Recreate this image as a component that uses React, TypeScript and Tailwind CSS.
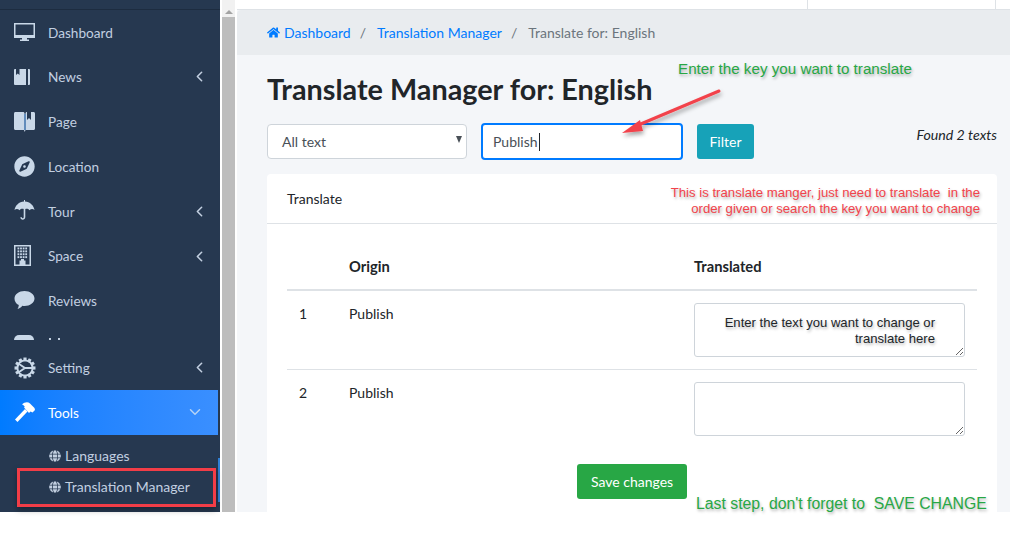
import { FaCompass, FaGlobe, FaHome } from "react-icons/fa";
import { ChevronLeft, ChevronDown } from "lucide-react";

const sans = "font-['Lato','Open_Sans',sans-serif]";
const C = "#c9d8e8";

function Desktop() {
  return (
    <svg width="22" height="22" viewBox="0 0 22 22">
      <rect x="0.75" y="2.75" width="19.5" height="13" fill="none" stroke={C} strokeWidth="1.5" />
      <rect x="0" y="14" width="21" height="3" fill={C} />
      <path d="M8 17h5v1.5h2V20H6v-1.500h2z" fill={C} />
    </svg>
  );
}
function Book() {
  return (
    <svg width="22" height="22" viewBox="0 0 22 22">
      <path d="M1 3h11v16H1a1 1 0 0 1-1-1V4a1 1 0 0 1 1-1z" fill={C} />
      <path d="M2 3h3.500v6L3.750 7.500 2 9z" fill="#263850" />
      <path d="M14 3h1a1 1 0 0 1 1 1v14a1 1 0 0 1-1 1h-1z" fill={C} />
    </svg>
  );
}
function Page() {
  return (
    <svg width="22" height="22" viewBox="0 0 22 22">
      <path d="M1.500 1h7.500c1 0 1.500.6 1.500 1.500V19H1.500C.6 19 0 18.400 0 17.500v-15C0 1.600.6 1 1.500 1z" fill={C} />
      <path d="M11.500 2.500c0-.9.5-1.500 1.500-1.500v8l2-2 2 2V1h2.500c.9 0 1.500.6 1.500 1.500v15c0 .9-.6 1.500-1.500 1.500h-8z" fill={C} />
      <rect x="10.500" y="3" width="1" height="16" fill="#4a90d9" />
      <path d="M10 19h1.500L10.800 21z" fill={C} />
    </svg>
  );
}
function Umbrella() {
  return (
    <svg width="22" height="22" viewBox="0 0 22 22">
      <path d="M10 0h1v1.500c5 .4 8.700 3.800 9.500 8.500-1.500-1.500-3.500-1.500-5 .2-1.200-1.400-2.300-1.700-4.200-1.300V17c0 3.500-5 3.500-5 .2h1.600c0 1.500 1.800 1.500 1.800-.2V8.900C8 8.500 6.700 8.800 5.500 10.200 4 8.500 2 8.500.5 10 1.300 5.300 5 1.900 10 1.500z" fill={C} />
    </svg>
  );
}
function Building() {
  const cells = [];
  for (let r = 0; r < 4; r++) for (let c = 0; c < 4; c++) cells.push(<rect key={`${r}-${c}`} x={3.500 + c * 2.600} y={2.500 + r * 2.900} width="1.800" height="1.900" fill={C} />);
  return (
    <svg width="22" height="22" viewBox="0 0 22 22">
      <rect x="0.750" y="0.750" width="15.500" height="19.500" fill="none" stroke={C} strokeWidth="1.500" />
      {cells}
      <path d="M5.500 20v-4.500h1.500V14h3v1.500h1.500V20z" fill={C} />
    </svg>
  );
}
function Comment() {
  return (
    <svg width="22" height="22" viewBox="0 0 22 22">
      <path d="M10.500 1C16 1 20.500 4.400 20.500 8.500S16 16 10.500 16c-.8 0-1.500-.1-2.200-.2C7 17.500 5.500 18.600 3.500 19c.8-1 1.200-2.300 1.300-3.900C2 13.800.5 11.300.5 8.500.5 4.400 5 1 10.500 1z" fill={C} />
    </svg>
  );
}
function Gear() {
  const teeth = [];
  for (let i = 0; i < 12; i++) teeth.push(<rect key={i} x="9" y="0.500" width="3" height="3.500" fill={C} transform={`rotate(${i * 30} 10.500 10.500)`} />);
  return (
    <svg width="22" height="22" viewBox="0 0 21 21">
      {teeth}
      <circle cx="10.500" cy="10.500" r="7.300" fill="none" stroke={C} strokeWidth="1.800" />
      <path d="M10.500 10.500L4.500 6.500M10.500 10.500L4.500 14.500M10.500 10.500H18" stroke={C} strokeWidth="1.800" />
    </svg>
  );
}
function Hammer() {
  return (
    <svg width="22" height="22" viewBox="0 0 22 22">
      <path d="M1 18.500L11 8l2.500 2.500L3.500 21z" fill="#fff" />
      <path d="M8 3.500C10.500 1 14 .6 16 2.500l4.500 4.500 .5 2-2.500 2.500-2-1-1.500 1.500L10 6.500l.8-.8C10 4.500 9 3.800 8 3.500z" fill="#fff" />
    </svg>
  );
}

function Row({ icon, label, chevron, nudge }: { icon: React.ReactNode; label: string; chevron?: boolean; nudge?: boolean }) {
  return (
    <div className="flex h-[44.8px] shrink-0 items-center pl-[14px] pr-[12px] text-[13.600px] text-[#c2cfe0]">
      <span className="flex w-[34px] shrink-0 items-center">{icon}</span>
      <span className={nudge ? "flex-1 pt-[2px]" : "flex-1"}>{label}</span>
      {chevron && <ChevronLeft size={17} strokeWidth={2.200} className="text-[#c2cfe0]" />}
    </div>
  );
}

export default function App() {
  return (
    <div className={`relative h-[537px] w-[1010px] overflow-hidden bg-white ${sans}`}>
      <div className="flex h-[512px] w-full">
        <aside className="flex w-[220px] shrink-0 flex-col bg-[#263850]">
          <div className="h-[10px] shrink-0 border-b border-[#1d2c40]" />
          <div className="mt-[-0.300px] shrink-0">
            <Row icon={<Desktop />} label="Dashboard" nudge />
            <Row icon={<Book />} label="News" chevron />
            <Row icon={<Page />} label="Page" />
            <Row icon={<FaCompass size={21} color={C} />} label="Location" nudge />
            <Row icon={<Umbrella />} label="Tour" chevron nudge />
            <Row icon={<Building />} label="Space" chevron />
            <Row icon={<Comment />} label="Reviews" />
          </div>
          <div className="flex h-[18px] shrink-0 items-start pl-[14px] pt-[12px]">
            <span className="h-[5px] w-[20px] rounded-t-full bg-[#c9d8e8]" />
            <span className="ml-[15px] mt-[3px] h-[2px] w-[2px] bg-[#c2cfe0]" />
            <span className="ml-[7px] mt-[3px] h-[2px] w-[2px] bg-[#c2cfe0]" />
          </div>
          <div className="shrink-0 pt-[3.900px]">
            <Row icon={<Gear />} label="Setting" chevron nudge />
          </div>
          <div className="flex h-[45px] w-[218px] shrink-0 items-center bg-gradient-to-r from-[#007bff] to-[#3a8fff] pl-[14px] pr-[14px] text-[13.600px] text-white">
            <span className="flex w-[34px] items-center"><Hammer /></span>
            <span className="flex-1 pt-[2px]">Tools</span>
            <ChevronDown size={18} strokeWidth={2} className="text-[#b5d3f5]" />
          </div>
          <div className="flex flex-1 flex-col pl-[49px] pt-[10px] text-[14px] text-[#c2cfe0]">
            <div className="flex h-[22px] items-center gap-[4px]"><FaGlobe className="text-[12px]" />Languages</div>
            <div className="mt-[9px] flex h-[22px] items-center gap-[4px]"><FaGlobe className="text-[12px]" />Translation Manager</div>
          </div>
        </aside>

        <div className="ml-[2px] flex w-[13px] shrink-0 flex-col bg-[#f1f1f1]">
          <div className="mt-px flex h-[16px] items-center justify-center pt-[6px]">
            <div className="h-0 w-0 border-x-[4px] border-b-[4px] border-x-transparent border-b-[#a3a3a3]" />
          </div>
          <div className="flex-1 bg-[#bdbdbd]" />
        </div>

        <main className="ml-[2px] flex min-w-0 flex-1 flex-col bg-[#f4f6f9]">
          <div className="flex h-[10px] shrink-0 border-b border-[#dee2e6] bg-white">
            <div className="ml-[570px] h-full w-[189px] border-x border-[#dee2e6]" />
          </div>
          <nav className="flex h-[45px] shrink-0 items-center rounded-tl-[4px] bg-[#e9ecef] pl-[30px] text-[14px]">
            <FaHome className="mr-[4px] text-[13px] text-[#007bff]" />
            <span className="text-[#007bff]">Dashboard</span>
            <span className="px-[9px] text-[#6c757d]">/</span>
            <span className="ml-[2px] text-[#007bff]">Translation Manager</span>
            <span className="px-[9px] text-[#6c757d]">/</span>
            <span className="ml-[2px] text-[#6c757d]">Translate for: English</span>
          </nav>
          <div className="flex min-h-0 flex-1 flex-col pl-[30px] pr-[13px]">
            <h1 className="mt-[15px] h-[38px] text-[28.800px] font-bold leading-[38px] text-[#212529]">Translate Manager for: English</h1>
            <div className="mt-[15px] flex h-[37px] shrink-0 items-center">
              <div className="relative flex h-[35px] w-[200px] items-center rounded-[4px] border border-[#ced4da] bg-white pl-[14px] text-[14px] text-[#495057]">
                All text
                <span className="absolute right-[4px] top-[11px] h-0 w-0 border-x-[3.500px] border-t-[7px] border-x-transparent border-t-[#495057]" />
              </div>
              <div className="ml-[14px] flex h-[37px] w-[202px] items-center rounded-[4px] border-2 border-[#007bff] bg-white pl-[10px] text-[14px] text-[#495057]">
                Publish<span className="ml-px h-[18px] w-px bg-[#212529]" />
              </div>
              <div className="ml-[14px] flex h-[35px] w-[57px] items-center justify-center rounded-[3px] bg-[#17a2b8] text-[14px] text-white">Filter</div>
              <div className="mb-[14px] flex-1 text-right text-[14.200px] italic text-[#212529]">Found 2 texts</div>
            </div>
            <section className="mt-[14px] min-h-0 flex-1 overflow-hidden rounded-t-[4px] bg-white">
              <div className="flex h-[50px] items-center border-b border-[#dee2e6] pl-[20px] text-[14px] text-[#212529]">Translate</div>
              <div className="mx-[20px] text-[14px] text-[#212529]">
                <div className="flex h-[67px] items-end border-b-2 border-[#dee2e6] pb-[12px] text-[14.700px] font-bold">
                  <span className="w-[62px]" />
                  <span className="w-[345px]">Origin</span>
                  <span>Translated</span>
                </div>
                <div className="flex h-[79px] border-b border-[#dee2e6] pt-[12px]">
                  <span className="w-[62px] pl-[12px]">1</span>
                  <span className="w-[345px]">Publish</span>
                  <textarea readOnly className="h-[54px] w-[271px] rounded-[3px] border border-[#ced4da] bg-white" />
                </div>
                <div className="flex h-[79px] pt-[12px]">
                  <span className="w-[62px] pl-[12px]">2</span>
                  <span className="w-[345px]">Publish</span>
                  <textarea readOnly className="h-[54px] w-[271px] rounded-[3px] border border-[#ced4da] bg-white" />
                </div>
                <div className="flex justify-center pt-[15px]">
                  <div className="flex h-[35px] w-[110px] items-center justify-center rounded-[3px] bg-[#28a745] text-[14px] text-white">Save changes</div>
                </div>
              </div>
            </section>
          </div>
        </main>
      </div>

      <div className="absolute left-[218px] top-[458px] h-[44px] w-[2px] bg-[#2d7fd6]" />
      <div className="pointer-events-none absolute left-[17px] top-[468px] h-[39px] w-[199px] border-[3px] border-[#f23d47] shadow-[0_3px_6px_rgba(0,0,0,0.35)]" />
      <svg className="pointer-events-none absolute left-[610px] top-[80px]" width="125" height="65" viewBox="0 0 125 65">
        <defs><filter id="s" x="-20%" y="-20%" width="150%" height="160%"><feDropShadow dx="1" dy="3" stdDeviation="2" floodColor="#000" floodOpacity="0.35" /></filter></defs>
        <g filter="url(#s)">
          <path d="M109 11 L26 46" stroke="#f2434b" strokeWidth="3" strokeLinecap="round" />
          <path d="M12 53 L30 40 L33 51 Z" fill="#f2434b" />
        </g>
      </svg>
      <div className="absolute left-[678px] top-[58px] font-['Liberation_Sans',sans-serif] text-[15.200px] text-[#28a745] [text-shadow:1px_2px_3px_rgba(0,0,0,0.3)]">Enter the key you want to translate</div>
      <div className="absolute right-[30px] top-[185px] text-right font-['Liberation_Sans',sans-serif] text-[13.200px] leading-[16px] text-[#f2434b] [text-shadow:1px_2px_3px_rgba(0,0,0,0.3)]">This is translate manger, just need to translate&nbsp; in the<br />order given or search the key you want to change</div>
      <div className="absolute left-[694px] top-[315px] w-[241px] text-right font-['Liberation_Sans',sans-serif] text-[13.100px] leading-[16px] text-[#212529] [text-shadow:1px_2px_3px_rgba(0,0,0,0.3)]">Enter the text you want to change or translate here</div>
      <div className="absolute left-[696px] top-[492px] font-['Liberation_Sans',sans-serif] text-[15.800px] text-[#28a745] [text-shadow:1px_2px_3px_rgba(0,0,0,0.3)]">Last step, don't forget to&nbsp; SAVE CHANGE</div>
    </div>
  );
}
